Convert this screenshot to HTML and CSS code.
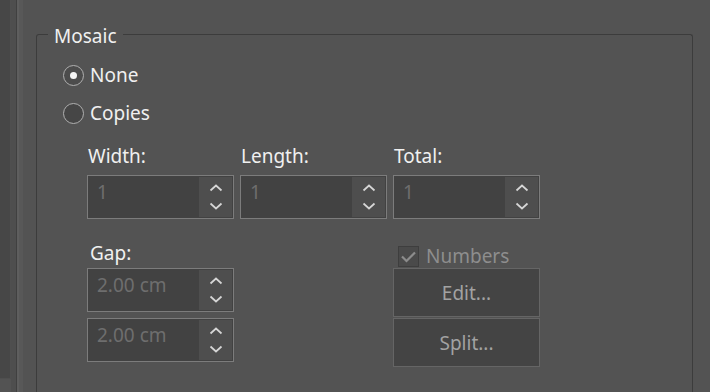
FILE: index.html
```html
<!DOCTYPE html>
<html>
	<head>
		<meta charset="utf-8">
		<title>Mosaic</title>
		<link rel="stylesheet" href="styles.css">
	</head>
	<body>
		<div class="app">
			<div class="rail">
				<div class="rail-panel"></div>
				<div class="rail-a"></div>
				<div class="rail-b"></div>
				<div class="rail-c"></div>
				<div class="rail-d"></div>
			</div>
			<div class="main">
				<fieldset class="group">
					<legend>Mosaic</legend>
					<div class="radio"><span class="circle on"></span>None</div>
					<div class="radio"><span class="circle"></span>Copies</div>

					<div class="grid">
						<div class="cap">Width:</div>
						<div class="cap">Length:</div>
						<div class="cap">Total:</div>
						<div class="spin">
							<span class="val">1</span>
							<span class="arrows">
								<svg width="14" height="8" viewBox="0 0 14 8"><path d="M1.5 6.5 L7 1.5 L12.5 6.5" /></svg>
								<svg width="14" height="8" viewBox="0 0 14 8"><path d="M1.5 1.5 L7 6.5 L12.5 1.5" /></svg>
							</span>
						</div>
						<div class="spin">
							<span class="val">1</span>
							<span class="arrows">
								<svg width="14" height="8" viewBox="0 0 14 8"><path d="M1.5 6.5 L7 1.5 L12.5 6.5" /></svg>
								<svg width="14" height="8" viewBox="0 0 14 8"><path d="M1.5 1.5 L7 6.5 L12.5 1.5" /></svg>
							</span>
						</div>
						<div class="spin">
							<span class="val">1</span>
							<span class="arrows">
								<svg width="14" height="8" viewBox="0 0 14 8"><path d="M1.5 6.5 L7 1.5 L12.5 6.5" /></svg>
								<svg width="14" height="8" viewBox="0 0 14 8"><path d="M1.5 1.5 L7 6.5 L12.5 1.5" /></svg>
							</span>
						</div>
					</div>

					<div class="grid lower">
						<div class="col">
							<div class="cap gap">Gap:</div>
							<div class="spin">
								<span class="val">2.00 cm</span>
								<span class="arrows">
									<svg width="14" height="8" viewBox="0 0 14 8"><path d="M1.5 6.5 L7 1.5 L12.5 6.5" /></svg>
									<svg width="14" height="8" viewBox="0 0 14 8"><path d="M1.5 1.5 L7 6.5 L12.5 1.5" /></svg>
								</span>
							</div>
							<div class="spin">
								<span class="val">2.00 cm</span>
								<span class="arrows">
									<svg width="14" height="8" viewBox="0 0 14 8"><path d="M1.5 6.5 L7 1.5 L12.5 6.5" /></svg>
									<svg width="14" height="8" viewBox="0 0 14 8"><path d="M1.5 1.5 L7 6.5 L12.5 1.5" /></svg>
								</span>
							</div>
						</div>
						<div class="col"></div>
						<div class="col">
							<div class="check">
								<span class="box">
									<svg width="21" height="21" viewBox="0 0 21 21"><path d="M4 10.5 L8.5 15 L17 6.5" /></svg>
								</span>
								Numbers
							</div>
							<div class="btn">Edit...</div>
							<div class="btn">Split...</div>
						</div>
					</div>
				</fieldset>
			</div>
		</div>
	</body>
</html>
```

FILE: styles.css
```css
*{
	box-sizing: border-box;
}
body{
	margin: 0;
	background: #535353;
	font-family: "Noto Sans", "Open Sans", sans-serif;
	font-size: 19px;
	line-height: 20px;
	color: #f0f0f0;
	width: 710px;
	height: 392px;
	overflow: hidden;
}
.app{
	display: flex;
	height: 392px;
	overflow: hidden;
}
.rail{
	display: flex;
	flex: none;
	width: 23px;
}
.rail-panel{
	width: 11px;
	height: 379px;
	background: #474747;
	border-right: 1px solid #4f4f4f;
	border-bottom: 1px solid #4f4f4f;
}
.rail-a{
	width: 5px;
	background: #4e4e4e;
}
.rail-b{
	width: 1px;
	background: #404040;
}
.rail-c{
	width: 2px;
	background: #5e5e5e;
}
.rail-d{
	width: 4px;
	background: #585858;
}
.main{
	flex: 1;
	padding: 23px 0 0 13px;
}
/* the group runs on past the bottom of the window, so no bottom edge */
.group{
	width: 657px;
	height: 369px;
	margin: 0;
	padding: 10px 0 0 11px;
	border: 1px solid #3c3c3c;
	border-bottom: none;
	border-radius: 3px 3px 0 0;
}
.group legend{
	padding: 3px 6px 0;
	line-height: 20px;
}
.radio{
	display: flex;
	align-items: center;
	height: 38px;
	margin-left: 15px;
}
.circle{
	width: 21px;
	height: 21px;
	border: 1px solid #b0b0b0;
	border-radius: 50%;
	background: #464646;
	margin-right: 6px;
	display: flex;
	align-items: center;
	justify-content: center;
}
.circle.on{
	background: #4c4c4c;
}
.circle.on::after{
	content: "";
	width: 7px;
	height: 7px;
	border-radius: 50%;
	background: #f4f4f4;
}
.grid{
	display: grid;
	grid-template-columns: 147px 147px 147px;
	column-gap: 6px;
	margin: 14px 0 0 39px;
}
.cap{
	padding-left: 1px;
	margin-bottom: 9px;
}
.spin{
	display: flex;
	height: 44px;
	padding: 1px;
	border: 1px solid #7c7c7c;
	background: #424242;
}
.val{
	flex: 1;
	padding: 5px 0 0 8px;
	color: #6e6e6e;
}
.arrows{
	width: 33px;
	background: #4e4e4e;
	display: flex;
	flex-direction: column;
	align-items: center;
	justify-content: center;
	gap: 10px;
}
.arrows svg{
	display: block;
}
.arrows path{
	fill: none;
	stroke: #d6d6d6;
	stroke-width: 1.7;
}
.lower{
	margin-top: 24px;
}
.col{
	display: flex;
	flex-direction: column;
}
.cap.gap{
	padding-left: 3px;
	margin-bottom: 5px;
}
.col .spin + .spin{
	margin-top: 6px;
}
.check{
	display: flex;
	align-items: center;
	height: 23px;
	margin-top: 2px;
	padding-left: 5px;
	color: #8e8e8e;
	line-height: 23px;
}
.box{
	width: 21px;
	height: 21px;
	margin-right: 7px;
	border: 1px solid #3e3e3e;
	background: #4a4a4a;
}
.box svg{
	display: block;
	margin: -1px;
}
.box path{
	fill: none;
	stroke: #8c8c8c;
	stroke-width: 2.2;
}
.btn{
	height: 49px;
	border: 1px solid #656565;
	background: #444444;
	color: #a2a2a2;
	display: flex;
	align-items: center;
	justify-content: center;
}
.btn + .btn{
	margin-top: 1px;
}
```
